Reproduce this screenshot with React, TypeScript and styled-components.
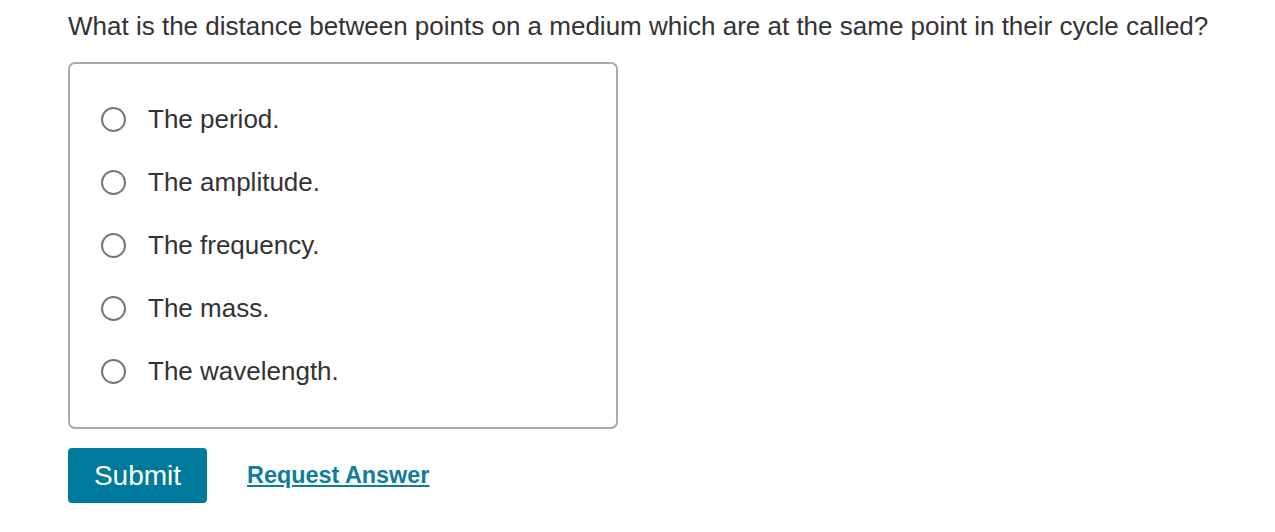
import styled, { createGlobalStyle } from 'styled-components'

const GlobalStyle = createGlobalStyle`
    body {
        margin: 0;
        background: #fff;
        font-family: "Liberation Sans", Arial, sans-serif;
        color: #333;
    }
`

const Page = styled.div`
    padding: 8px 20px 8px 68px;
`

const Question = styled.p`
    margin: 0 0 18px;
    font-size: 26px;
    line-height: 36px;
    color: #333;
`

const ChoiceBox = styled.fieldset`
    margin: 0;
    width: 550px;
    box-sizing: border-box;
    border: 2px solid #aaa;
    border-radius: 7px;
    padding: 24px 0 24px 31px;
    display: flex;
    flex-direction: column;
`

const Choice = styled.label`
    height: 63px;
    display: flex;
    align-items: center;
    gap: 22px;
    font-size: 26px;
    color: #333;
    cursor: pointer;
`

const Radio = styled.span`
    width: 25px;
    height: 25px;
    box-sizing: border-box;
    border: 2px solid #767676;
    border-radius: 50%;
    flex: none;
`

const Actions = styled.div`
    margin-top: 19px;
    display: flex;
    align-items: center;
    gap: 40px;
`

const SubmitButton = styled.button`
    width: 139px;
    height: 55px;
    border: none;
    border-radius: 4px;
    background: #007a9c;
    color: #fff;
    font-family: "Liberation Sans", Arial, sans-serif;
    font-size: 28px;
    cursor: pointer;
`

const RequestLink = styled.a`
    font-size: 23.4px;
    font-weight: bold;
    color: #0e7c9c;
    text-decoration: underline;
    cursor: pointer;
`

const choices = [
    'The period.',
    'The amplitude.',
    'The frequency.',
    'The mass.',
    'The wavelength.',
]

function App() {
    return (
        <>
            <GlobalStyle />
            <Page>
                <Question>
                    What is the distance between points on a medium which are at the same point in their cycle called?
                </Question>
                <ChoiceBox>
                    {choices.map((c) => (
                        <Choice key={c}>
                            <Radio />
                            {c}
                        </Choice>
                    ))}
                </ChoiceBox>
                <Actions>
                    <SubmitButton>Submit</SubmitButton>
                    <RequestLink>Request Answer</RequestLink>
                </Actions>
            </Page>
        </>
    )
}

export default App
